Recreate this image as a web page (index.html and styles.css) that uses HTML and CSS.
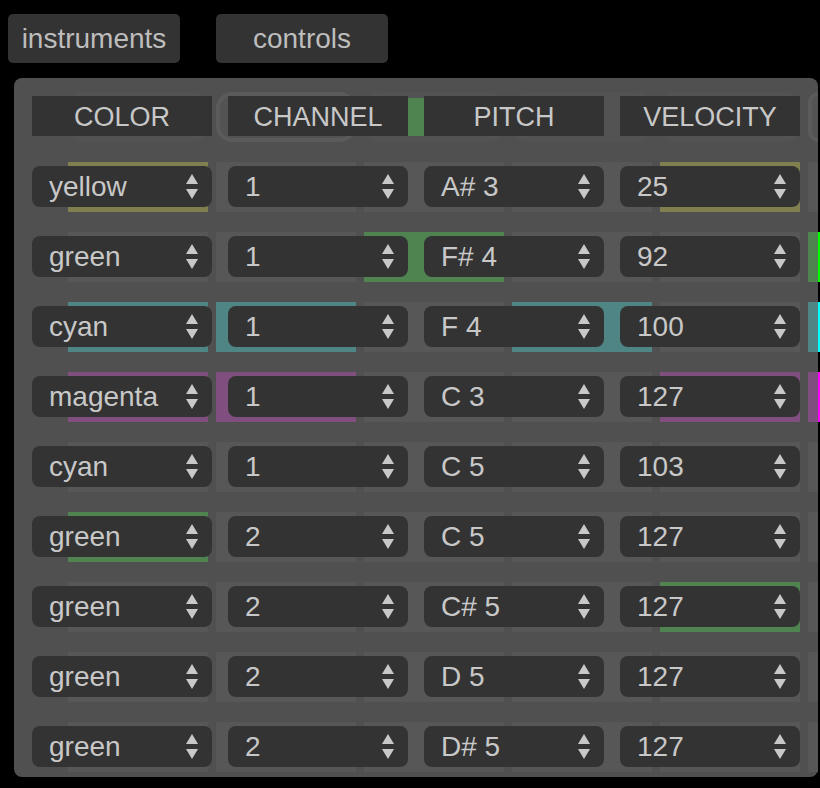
FILE: index.html
```html
<!DOCTYPE html>
<html>
<head>
<meta charset="utf-8">
<link rel="stylesheet" href="styles.css">
</head>
<body>
<div class="tabs">
  <div class="tab">instruments</div>
  <div class="tab">controls</div>
</div>
<div class="panel">
  <div class="row head">
    <div class="bg">
      <div class="cell"></div><div class="cell ring"></div><div class="cell hgreen"></div><div class="cell"></div><div class="cell"></div><div class="cell edge ring-edge"></div>
    </div>
    <div class="fg">
      <div class="hcell">COLOR</div><div class="hcell">CHANNEL</div><div class="hcell">PITCH</div><div class="hcell">VELOCITY</div>
    </div>
  </div>

  <div class="row">
    <div class="bg">
      <div class="cell y"></div><div class="cell"></div><div class="cell"></div><div class="cell"></div><div class="cell y"></div><div class="cell edge"></div>
    </div>
    <div class="fg">
      <div class="sel"><span>yellow</span><svg class="arr" viewBox="0 0 12 26"><path d="M6 0 L12 10 L0 10 Z M0 15 L12 15 L6 25 Z"/></svg></div>
      <div class="sel"><span>1</span><svg class="arr" viewBox="0 0 12 26"><path d="M6 0 L12 10 L0 10 Z M0 15 L12 15 L6 25 Z"/></svg></div>
      <div class="sel"><span>A# 3</span><svg class="arr" viewBox="0 0 12 26"><path d="M6 0 L12 10 L0 10 Z M0 15 L12 15 L6 25 Z"/></svg></div>
      <div class="sel"><span>25</span><svg class="arr" viewBox="0 0 12 26"><path d="M6 0 L12 10 L0 10 Z M0 15 L12 15 L6 25 Z"/></svg></div>
    </div>
  </div>

  <div class="row">
    <div class="bg">
      <div class="cell"></div><div class="cell"></div><div class="cell g"></div><div class="cell"></div><div class="cell"></div><div class="cell edge ge"></div>
    </div>
    <div class="fg">
      <div class="sel"><span>green</span><svg class="arr" viewBox="0 0 12 26"><path d="M6 0 L12 10 L0 10 Z M0 15 L12 15 L6 25 Z"/></svg></div>
      <div class="sel"><span>1</span><svg class="arr" viewBox="0 0 12 26"><path d="M6 0 L12 10 L0 10 Z M0 15 L12 15 L6 25 Z"/></svg></div>
      <div class="sel"><span>F# 4</span><svg class="arr" viewBox="0 0 12 26"><path d="M6 0 L12 10 L0 10 Z M0 15 L12 15 L6 25 Z"/></svg></div>
      <div class="sel"><span>92</span><svg class="arr" viewBox="0 0 12 26"><path d="M6 0 L12 10 L0 10 Z M0 15 L12 15 L6 25 Z"/></svg></div>
    </div>
  </div>

  <div class="row">
    <div class="bg">
      <div class="cell c"></div><div class="cell c"></div><div class="cell"></div><div class="cell c"></div><div class="cell"></div><div class="cell edge ce"></div>
    </div>
    <div class="fg">
      <div class="sel"><span>cyan</span><svg class="arr" viewBox="0 0 12 26"><path d="M6 0 L12 10 L0 10 Z M0 15 L12 15 L6 25 Z"/></svg></div>
      <div class="sel"><span>1</span><svg class="arr" viewBox="0 0 12 26"><path d="M6 0 L12 10 L0 10 Z M0 15 L12 15 L6 25 Z"/></svg></div>
      <div class="sel"><span>F 4</span><svg class="arr" viewBox="0 0 12 26"><path d="M6 0 L12 10 L0 10 Z M0 15 L12 15 L6 25 Z"/></svg></div>
      <div class="sel"><span>100</span><svg class="arr" viewBox="0 0 12 26"><path d="M6 0 L12 10 L0 10 Z M0 15 L12 15 L6 25 Z"/></svg></div>
    </div>
  </div>

  <div class="row">
    <div class="bg">
      <div class="cell m"></div><div class="cell m"></div><div class="cell"></div><div class="cell"></div><div class="cell m"></div><div class="cell edge me"></div>
    </div>
    <div class="fg">
      <div class="sel"><span>magenta</span><svg class="arr" viewBox="0 0 12 26"><path d="M6 0 L12 10 L0 10 Z M0 15 L12 15 L6 25 Z"/></svg></div>
      <div class="sel"><span>1</span><svg class="arr" viewBox="0 0 12 26"><path d="M6 0 L12 10 L0 10 Z M0 15 L12 15 L6 25 Z"/></svg></div>
      <div class="sel"><span>C 3</span><svg class="arr" viewBox="0 0 12 26"><path d="M6 0 L12 10 L0 10 Z M0 15 L12 15 L6 25 Z"/></svg></div>
      <div class="sel"><span>127</span><svg class="arr" viewBox="0 0 12 26"><path d="M6 0 L12 10 L0 10 Z M0 15 L12 15 L6 25 Z"/></svg></div>
    </div>
  </div>

  <div class="row">
    <div class="bg">
      <div class="cell"></div><div class="cell"></div><div class="cell"></div><div class="cell"></div><div class="cell"></div><div class="cell edge"></div>
    </div>
    <div class="fg">
      <div class="sel"><span>cyan</span><svg class="arr" viewBox="0 0 12 26"><path d="M6 0 L12 10 L0 10 Z M0 15 L12 15 L6 25 Z"/></svg></div>
      <div class="sel"><span>1</span><svg class="arr" viewBox="0 0 12 26"><path d="M6 0 L12 10 L0 10 Z M0 15 L12 15 L6 25 Z"/></svg></div>
      <div class="sel"><span>C 5</span><svg class="arr" viewBox="0 0 12 26"><path d="M6 0 L12 10 L0 10 Z M0 15 L12 15 L6 25 Z"/></svg></div>
      <div class="sel"><span>103</span><svg class="arr" viewBox="0 0 12 26"><path d="M6 0 L12 10 L0 10 Z M0 15 L12 15 L6 25 Z"/></svg></div>
    </div>
  </div>

  <div class="row">
    <div class="bg">
      <div class="cell g"></div><div class="cell"></div><div class="cell"></div><div class="cell"></div><div class="cell"></div><div class="cell edge"></div>
    </div>
    <div class="fg">
      <div class="sel"><span>green</span><svg class="arr" viewBox="0 0 12 26"><path d="M6 0 L12 10 L0 10 Z M0 15 L12 15 L6 25 Z"/></svg></div>
      <div class="sel"><span>2</span><svg class="arr" viewBox="0 0 12 26"><path d="M6 0 L12 10 L0 10 Z M0 15 L12 15 L6 25 Z"/></svg></div>
      <div class="sel"><span>C 5</span><svg class="arr" viewBox="0 0 12 26"><path d="M6 0 L12 10 L0 10 Z M0 15 L12 15 L6 25 Z"/></svg></div>
      <div class="sel"><span>127</span><svg class="arr" viewBox="0 0 12 26"><path d="M6 0 L12 10 L0 10 Z M0 15 L12 15 L6 25 Z"/></svg></div>
    </div>
  </div>

  <div class="row">
    <div class="bg">
      <div class="cell"></div><div class="cell"></div><div class="cell"></div><div class="cell"></div><div class="cell g"></div><div class="cell edge"></div>
    </div>
    <div class="fg">
      <div class="sel"><span>green</span><svg class="arr" viewBox="0 0 12 26"><path d="M6 0 L12 10 L0 10 Z M0 15 L12 15 L6 25 Z"/></svg></div>
      <div class="sel"><span>2</span><svg class="arr" viewBox="0 0 12 26"><path d="M6 0 L12 10 L0 10 Z M0 15 L12 15 L6 25 Z"/></svg></div>
      <div class="sel"><span>C# 5</span><svg class="arr" viewBox="0 0 12 26"><path d="M6 0 L12 10 L0 10 Z M0 15 L12 15 L6 25 Z"/></svg></div>
      <div class="sel"><span>127</span><svg class="arr" viewBox="0 0 12 26"><path d="M6 0 L12 10 L0 10 Z M0 15 L12 15 L6 25 Z"/></svg></div>
    </div>
  </div>

  <div class="row">
    <div class="bg">
      <div class="cell"></div><div class="cell"></div><div class="cell"></div><div class="cell"></div><div class="cell"></div><div class="cell edge"></div>
    </div>
    <div class="fg">
      <div class="sel"><span>green</span><svg class="arr" viewBox="0 0 12 26"><path d="M6 0 L12 10 L0 10 Z M0 15 L12 15 L6 25 Z"/></svg></div>
      <div class="sel"><span>2</span><svg class="arr" viewBox="0 0 12 26"><path d="M6 0 L12 10 L0 10 Z M0 15 L12 15 L6 25 Z"/></svg></div>
      <div class="sel"><span>D 5</span><svg class="arr" viewBox="0 0 12 26"><path d="M6 0 L12 10 L0 10 Z M0 15 L12 15 L6 25 Z"/></svg></div>
      <div class="sel"><span>127</span><svg class="arr" viewBox="0 0 12 26"><path d="M6 0 L12 10 L0 10 Z M0 15 L12 15 L6 25 Z"/></svg></div>
    </div>
  </div>

  <div class="row">
    <div class="bg">
      <div class="cell"></div><div class="cell"></div><div class="cell"></div><div class="cell"></div><div class="cell"></div><div class="cell edge"></div>
    </div>
    <div class="fg">
      <div class="sel"><span>green</span><svg class="arr" viewBox="0 0 12 26"><path d="M6 0 L12 10 L0 10 Z M0 15 L12 15 L6 25 Z"/></svg></div>
      <div class="sel"><span>2</span><svg class="arr" viewBox="0 0 12 26"><path d="M6 0 L12 10 L0 10 Z M0 15 L12 15 L6 25 Z"/></svg></div>
      <div class="sel"><span>D# 5</span><svg class="arr" viewBox="0 0 12 26"><path d="M6 0 L12 10 L0 10 Z M0 15 L12 15 L6 25 Z"/></svg></div>
      <div class="sel"><span>127</span><svg class="arr" viewBox="0 0 12 26"><path d="M6 0 L12 10 L0 10 Z M0 15 L12 15 L6 25 Z"/></svg></div>
    </div>
  </div>
</div>
</body>
</html>
```
FILE: styles.css
```css
* { box-sizing: border-box; }
html, body { margin: 0; background: #000; overflow: hidden; }
body {
  width: 820px;
  height: 788px;
  font-family: "Liberation Sans", Arial, Helvetica, sans-serif;
  color: #c8c8c8;
}
.tabs {
  display: flex;
  gap: 36px;
  padding: 14px 0 0 8px;
}
.tab {
  width: 172px;
  height: 49px;
  background: #333333;
  border-radius: 5px;
  font-size: 28px;
  line-height: 49px;
  text-align: center;
  color: #bdbdbd;
}
.panel {
  margin: 15px 0 0 14px;
  width: 804px;
  height: 699px;
  background: #505050;
  border-radius: 8px;
  padding-top: 14px;
  display: flex;
  flex-direction: column;
  gap: 20px;
}
.row {
  display: grid;
  height: 50px;
}
.row > * { grid-area: 1 / 1; }
.bg {
  display: flex;
  gap: 8px;
  padding-left: 54px;
}
.cell {
  flex: none;
  width: 140px;
  height: 50px;
  background: #575757;
}
.cell.edge {
  width: 12px;
  background: linear-gradient(to right, #575757 10px, transparent 10px);
}
.cell.y { background: #807f50; }
.cell.g { background: #4f8450; }
.cell.c { background: #4f8584; }
.cell.m { background: #804f80; }
.cell.edge.ge { background: linear-gradient(to right, #4f8450 10px, #00ff00 10px); }
.cell.edge.ce { background: linear-gradient(to right, #4f8584 10px, #00ffff 10px); }
.cell.edge.me { background: linear-gradient(to right, #804f80 10px, #ff00ff 10px); }

.head .cell {
  background: #535353;
  border-radius: 16px;
}
.head .cell.ring {
  border: 4px solid #5b5b5b;
  background: #535353;
}
.head .cell.hgreen {
  background:
    linear-gradient(to bottom, transparent 6px, #4f8450 6px, #4f8450 44px, transparent 44px),
    #535353;
}
.head .cell.edge.ring-edge {
  width: 10px;
  border: 4px solid #5b5b5b;
  border-right: none;
  border-radius: 16px 0 0 16px;
  background: #535353;
}

.fg {
  display: flex;
  gap: 16px;
  padding: 4px 0 0 18px;
}
.hcell {
  flex: none;
  width: 180px;
  height: 40px;
  background: #333333;
  text-align: center;
  font-size: 27px;
  line-height: 42px;
  color: #c8c8c8;
}
.sel {
  flex: none;
  width: 180px;
  height: 41px;
  background: #333333;
  border-radius: 8px;
  display: flex;
  align-items: center;
  justify-content: space-between;
  padding: 0 14px 0 17px;
  font-size: 28px;
  line-height: 39px;
}
.arr {
  width: 12px;
  height: 26px;
  fill: #c8c8c8;
}
```
